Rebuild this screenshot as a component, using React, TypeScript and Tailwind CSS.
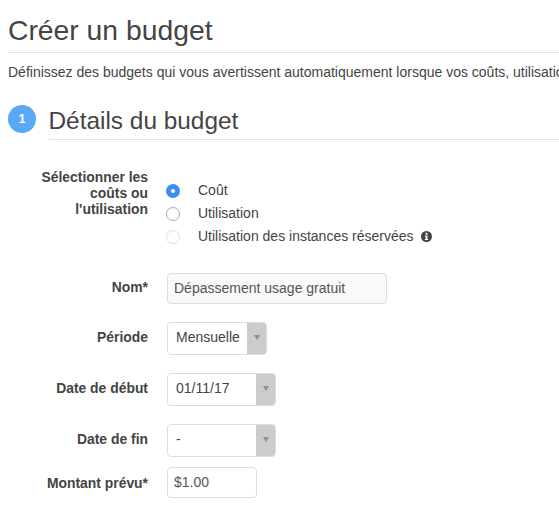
const labelClass = 'w-[140px] shrink-0 text-right text-[13.9px] font-bold leading-4 text-[#444]'

function Select({ value, width }: { value: string; width: string }) {
  return (
    <div className={`flex h-[33px] ${width} overflow-hidden rounded-[4px] border border-[#ddd] bg-white`}>
      <span className="flex-1 pl-2 text-[14px] leading-[29px] text-[#444]">{value}</span>
      <span className="flex w-[19px] items-start justify-center bg-[#ccc] pt-[12px]">
        <svg width="6" height="5" viewBox="0 0 6 5"><path d="M0 0h6L3 5z" fill="#8f8f8f" /></svg>
      </span>
    </div>
  )
}

function Radio({ state, label }: { state: 'on' | 'off' | 'disabled'; label: string }) {
  return (
    <div className="flex h-[23px] items-center">
      {state === 'on' && (
        <span className="flex h-[14px] w-[14px] items-center justify-center rounded-full bg-[#3b8ff3]">
          <span className="h-1 w-1 rounded-full bg-white" />
        </span>
      )}
      {state === 'off' && <span className="h-[14px] w-[14px] rounded-full border border-[#aaa] bg-white" />}
      {state === 'disabled' && <span className="h-[14px] w-[14px] rounded-full border border-[#ddd] bg-white" />}
      <span className="ml-[18px] text-[14px] text-[#444]">{label}</span>
      {state === 'disabled' && (
        <svg className="ml-[7px]" width="11" height="11" viewBox="0 0 11 11">
          <circle cx="5.5" cy="5.5" r="5.5" fill="#444" />
          <rect x="4.6" y="1.8" width="1.9" height="1.8" fill="#fff" />
          <path d="M3.9 4.5h2.6v3.6h.7v1H3.9v-1h.7V5.5h-.7z" fill="#fff" />
        </svg>
      )}
    </div>
  )
}

export default function App() {
  return (
    <div className="h-[509px] w-[559px] overflow-hidden bg-white pl-2 font-['Liberation_Sans',Arial,sans-serif]">
      <h1 className="mt-[13px] border-b border-[#e2e2e2] pb-[5px] text-[28.3px] leading-[34px] text-[#444]">Créer un budget</h1>
      <p className="mt-[9px] whitespace-nowrap text-[14px] leading-5 text-[#444]">
        Définissez des budgets qui vous avertissent automatiquement lorsque vos coûts, utilisation ou couverture dépassent
      </p>

      <div className="mt-[23px] flex items-start">
        <span className="flex h-7 w-7 shrink-0 items-center justify-center rounded-full bg-[#5ba8f7] text-[12px] font-bold text-white">1</span>
        <h2 className="ml-[12.5px] flex-1 border-b border-[#e2e2e2] pb-[2px] text-[24.4px] leading-[32px] text-[#444]">Détails du budget</h2>
      </div>

      <div className="mt-[29px] flex">
        <div className={labelClass}>
          Sélectionner les<br />coûts ou<br />l'utilisation
        </div>
        <div className="ml-[18px] mt-[10px]">
          <Radio state="on" label="Coût" />
          <Radio state="off" label="Utilisation" />
          <Radio state="disabled" label="Utilisation des instances réservées" />
        </div>
      </div>

      <div className="mt-[25px] flex items-center">
        <div className={`${labelClass} pb-[4px]`}>Nom*</div>
        <div className="ml-[19px] h-[31px] w-[220px] rounded-[4px] border border-[#ddd] bg-[#f9f9f9] pl-[6px] text-[14px] leading-[29px] text-[#555]">
          Dépassement usage gratuit
        </div>
      </div>

      <div className="mt-[18px] flex items-center">
        <div className={`${labelClass} pb-[4px]`}>Période</div>
        <div className="ml-[19px]"><Select value="Mensuelle" width="w-[100px]" /></div>
      </div>

      <div className="mt-[18px] flex items-center">
        <div className={`${labelClass} pb-[4px]`}>Date de début</div>
        <div className="ml-[19px]"><Select value="01/11/17" width="w-[109px]" /></div>
      </div>

      <div className="mt-[18px] flex items-center">
        <div className={`${labelClass} pb-[4px]`}>Date de fin</div>
        <div className="ml-[19px]"><Select value="-" width="w-[109px]" /></div>
      </div>

      <div className="mt-[10px] flex items-center">
        <div className={labelClass}>Montant prévu*</div>
        <div className="ml-[19px] h-[31px] w-[90px] rounded-[4px] border border-[#ddd] bg-white pl-[6px] text-[14px] leading-[28px] text-[#555]">
          $1.00
        </div>
      </div>
    </div>
  )
}
